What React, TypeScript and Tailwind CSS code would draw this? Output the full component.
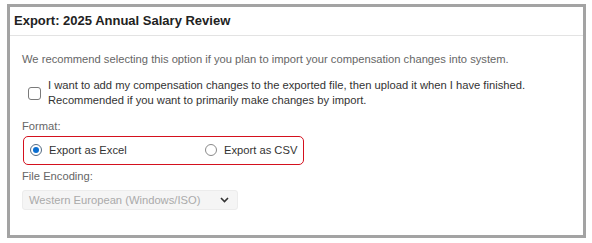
export default function App() {
  return (
    <div className="w-[592px] h-[243px] bg-white pt-[4px] pl-[7px]" style={{ fontFamily: '"Liberation Sans", Arial, sans-serif' }}>
      <div className="w-[579px] h-[234px] border-[3px] border-[#a3a3a3] bg-white flex flex-col">
        <div className="h-[29px] border-b border-[#e3e3e3] flex items-center pl-[4px]">
          <h1 className="text-[13px] font-bold text-[#222]">Export: 2025 Annual Salary Review</h1>
        </div>
        <div className="pl-[12px] pt-[16px] flex flex-col">
          <p className="text-[11.2px] text-[#666] leading-[14px]">
            We recommend selecting this option if you plan to import your compensation changes into system.
          </p>
          <div className="flex items-center mt-[12px] pl-[6px]">
            <span className="w-[13px] h-[13px] rounded-[3px] border border-[#7a7a7a] bg-white shrink-0" />
            <div className="ml-[7px] text-[11.2px] text-[#333] leading-[15px]">
              <div>I want to add my compensation changes to the exported file, then upload it when I have finished.</div>
              <div>Recommended if you want to primarily make changes by import.</div>
            </div>
          </div>
          <div className="mt-[11px] text-[11.2px] text-[#666] leading-[14px]">Format:</div>
          <div className="mt-[3px] ml-[1px] w-[281px] h-[29px] border border-[#d4111e] rounded-[5px] flex items-center pl-[6px]">
            <div className="flex items-center w-[175px]">
              <span className="w-[12px] h-[12px] rounded-full border border-[#556b82] flex items-center justify-center">
                <span className="w-[6px] h-[6px] rounded-full bg-[#0a6ed1]" />
              </span>
              <span className="ml-[7px] text-[11.2px] text-[#333]">Export as Excel</span>
            </div>
            <div className="flex items-center">
              <span className="w-[12px] h-[12px] rounded-full border border-[#8a8a8a]" />
              <span className="ml-[7px] text-[11.2px] text-[#333]">Export as CSV</span>
            </div>
          </div>
          <div className="mt-[4px] text-[11.2px] text-[#666] leading-[14px]">File Encoding:</div>
          <div className="mt-[7px] w-[216px] h-[20px] bg-[#f5f5f5] border border-[#ececec] rounded-[3px] flex items-center justify-between pl-[6px] pr-[8px]">
            <span className="text-[11.2px] text-[#aaa]">Western European (Windows/ISO)</span>
            <svg width="9" height="6" viewBox="0 0 9 6">
              <path d="M1 1l3.5 3.5L8 1" fill="none" stroke="#333" strokeWidth="1.6" />
            </svg>
          </div>
        </div>
      </div>
    </div>
  )
}
